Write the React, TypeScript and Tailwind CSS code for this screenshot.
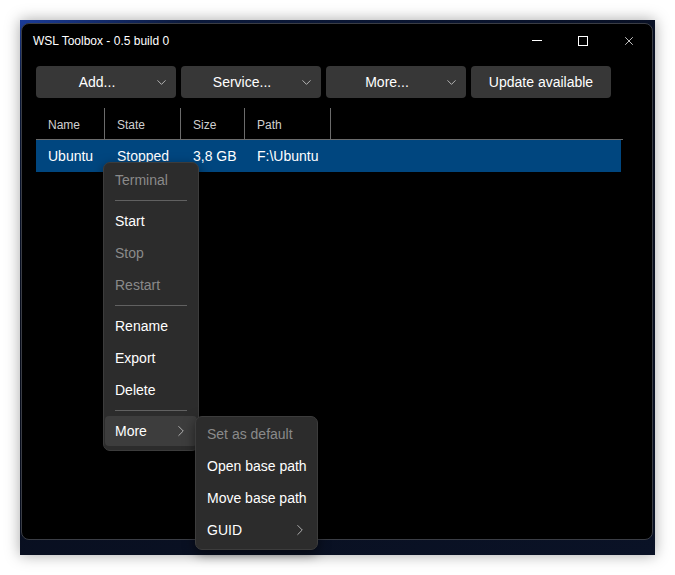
import { ChevronDown, ChevronRight, X } from 'lucide-react';

const font = { fontFamily: '"Liberation Sans", "Noto Sans", Arial, sans-serif' };

function DropButton({ label }: { label: string }) {
  return (
    <button className="flex h-[32px] w-[140px] items-center rounded-[4px] bg-[#373737] pr-[7px] text-[14px] text-white">
      <span className="flex-1 pl-[4px] text-center">{label}</span>
      <ChevronDown className="h-[15px] w-[15px] text-[#cfcfcf]" strokeWidth={1.3} />
    </button>
  );
}

type MenuItem = { label: string; disabled?: boolean; sub?: boolean; active?: boolean } | 'sep';

function Menu({ items, className }: { items: MenuItem[]; className: string }) {
  return (
    <div className={`absolute rounded-[7px] border border-[#3c3c3c] bg-[#2c2c2c] pt-[1px] pb-[3px] shadow-[0_4px_12px_rgba(0,0,0,0.5)] ${className}`}>
      {items.map((it, i) =>
        it === 'sep' ? (
          <div key={i} className="flex h-[9px] items-center px-[11px]">
            <div className="h-px w-full bg-[#616161]" />
          </div>
        ) : (
          <div key={i} className="flex h-[32px] items-center px-[1px]">
            <div
              className={`flex h-[30px] w-full items-center whitespace-nowrap rounded-[4px] pl-[10px] pr-[7px] text-[14px] ${
                it.active ? 'bg-[#3d3d3d]' : ''
              } ${it.disabled ? 'text-[#8a8a8a]' : 'text-white'}`}
            >
              <span className="flex-1">{it.label}</span>
              {it.sub && <ChevronRight className="h-[18px] w-[18px] text-[#c8c8c8]" strokeWidth={1.1} />}
            </div>
          </div>
        )
      )}
    </div>
  );
}

export default function App() {
  return (
    <div className="h-[575px] w-[675px] bg-white p-[20px]" style={font}>
      <div className="h-[535px] w-[635px] bg-[linear-gradient(160deg,#1b3c9a_0%,#0c1a3c_8%,#080d1c_40%,#0a1226_100%)] pl-[1px] pt-[3px] shadow-[0_0_14px_rgba(0,0,0,0.35)]">
        <div className="relative flex h-[517px] w-[632px] flex-col rounded-[8px] border border-[#3a3d45] bg-black">
          {/* title bar */}
          <div className="flex h-[33px] items-center">
            <span className="flex-1 pl-[11px] pt-[1px] text-[12px] text-white">WSL Toolbox - 0.5 build 0</span>
            <div className="flex h-full">
              <div className="flex w-[46px] items-center justify-center">
                <div className="h-px w-[10px] bg-white" />
              </div>
              <div className="flex w-[46px] items-center justify-center">
                <div className="h-[10px] w-[10px] border border-white" />
              </div>
              <div className="flex w-[46px] items-center justify-center">
                <X className="h-[14px] w-[14px] text-white" strokeWidth={1.3} />
              </div>
            </div>
          </div>

          {/* toolbar */}
          <div className="mt-[9px] flex gap-[5px] pl-[14px]">
            <DropButton label="Add..." />
            <DropButton label="Service..." />
            <DropButton label="More..." />
            <button className="h-[32px] w-[140px] rounded-[4px] bg-[#373737] text-[14px] text-white">Update available</button>
          </div>

          {/* table */}
          <div className="mt-[10px] w-[601px] pl-[14px]">
            <div className="flex h-[32px] border-b border-[#6b6b6b] text-[12px] text-[#d0d0d0]">
              <div className="flex w-[69px] items-center border-r border-[#6b6b6b] pl-[12px] pt-[2px]">Name</div>
              <div className="flex w-[76px] items-center border-r border-[#6b6b6b] pl-[12px] pt-[2px]">State</div>
              <div className="flex w-[64px] items-center border-r border-[#6b6b6b] pl-[12px] pt-[2px]">Size</div>
              <div className="flex w-[86px] items-center border-r border-[#6b6b6b] pl-[12px] pt-[2px]">Path</div>
            </div>
            <div className="flex h-[32px] w-[585px] items-center bg-[#00467f] text-[14px] text-white">
              <div className="w-[69px] pl-[12px]">Ubuntu</div>
              <div className="w-[76px] pl-[12px]">Stopped</div>
              <div className="w-[64px] pl-[12px]">3,8 GB</div>
              <div className="w-[86px] pl-[12px]">F:\Ubuntu</div>
            </div>
          </div>

          <Menu
            className="left-[81px] top-[138px] w-[96px]"
            items={[
              { label: 'Terminal', disabled: true },
              'sep',
              { label: 'Start' },
              { label: 'Stop', disabled: true },
              { label: 'Restart', disabled: true },
              'sep',
              { label: 'Rename' },
              { label: 'Export' },
              { label: 'Delete' },
              'sep',
              { label: 'More', sub: true, active: true },
            ]}
          />
          <Menu
            className="left-[173px] top-[392px] w-[123px]"
            items={[
              { label: 'Set as default', disabled: true },
              { label: 'Open base path' },
              { label: 'Move base path' },
              { label: 'GUID', sub: true },
            ]}
          />
        </div>
      </div>
    </div>
  );
}
